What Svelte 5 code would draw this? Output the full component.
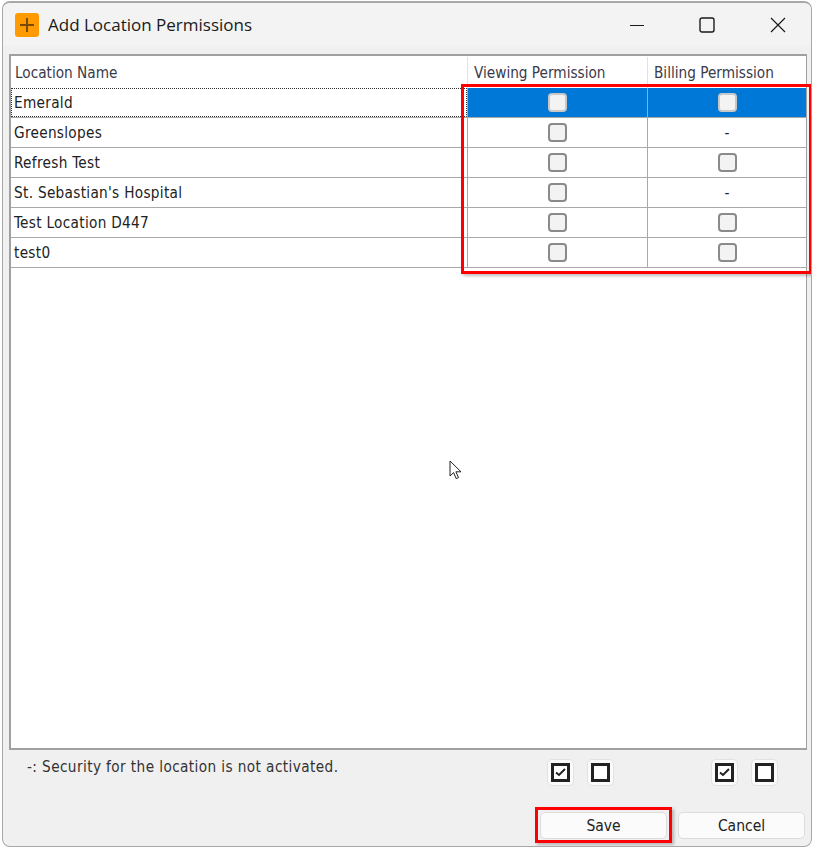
<script>
	const rows = [
		{ name: 'Emerald', billing: true },
		{ name: 'Greenslopes', billing: false },
		{ name: 'Refresh Test', billing: true },
		{ name: "St. Sebastian's Hospital", billing: false },
		{ name: 'Test Location D447', billing: true },
		{ name: 'test0', billing: true }
	];
</script>

<div class="screen">
	<div class="window">
		<header class="titlebar">
			<svg class="app-icon" width="24" height="24" viewBox="0 0 24 24">
				<rect width="24" height="24" rx="3" fill="#ff9a00" />
				<path d="M12 5v14M5 12h14" stroke="#7a4a08" stroke-width="2" fill="none" />
			</svg>
			<span class="title">Add Location Permissions</span>
			<div class="controls">
				<svg width="16" height="16" viewBox="0 0 16 16"><path d="M2 8.5h14" stroke="#1a1a1a" fill="none" /></svg>
				<svg width="16" height="16" viewBox="0 0 16 16"><rect x="1" y="1" width="14" height="14" rx="2" stroke="#1a1a1a" stroke-width="1.4" fill="none" /></svg>
				<svg width="16" height="16" viewBox="0 0 16 16"><path d="M1 1l14 14M15 1L1 15" stroke="#1a1a1a" stroke-width="1.2" fill="none" /></svg>
			</div>
		</header>

		<main class="content">
			<div class="table">
				<div class="row head">
					<div class="cell name">Location Name</div>
					<div class="cell col">Viewing Permission</div>
					<div class="cell col">Billing Permission</div>
				</div>
				{#each rows as row, i}
					<div class="row" class:selected={i === 0}>
						<div class="cell name">{row.name}</div>
						<div class="cell col mid"><span class="check"></span></div>
						<div class="cell col mid">
							{#if row.billing}<span class="check"></span>{:else}-{/if}
						</div>
					</div>
				{/each}
			</div>

			<div class="legend-row">
				<span class="legend">-: Security for the location is not activated.</span>
				<div class="tools">
					{#each [0, 1] as group}
						<div class="tool-group">
							<button class="tool" aria-label="check all">
								<svg width="19" height="19" viewBox="0 0 19 19">
									<rect x="1.5" y="1.5" width="16" height="16" fill="#fff" stroke="#222" stroke-width="3" />
									<path d="M5 9.5l3 2.5 6-6" stroke="#222" stroke-width="2" fill="none" />
								</svg>
							</button>
							<button class="tool" aria-label="uncheck all">
								<svg width="19" height="19" viewBox="0 0 19 19">
									<rect x="1.5" y="1.5" width="16" height="16" fill="#fff" stroke="#222" stroke-width="3" />
								</svg>
							</button>
						</div>
					{/each}
				</div>
			</div>

			<div class="actions">
				<button class="btn">Save</button>
				<button class="btn">Cancel</button>
			</div>
		</main>

		<div class="mark mark-table"></div>
		<div class="mark mark-save"></div>
		<svg class="cursor" width="14" height="21" viewBox="0 0 14 21">
			<path d="M1 1v15l3.6-3.4 2.6 6 2.3-1-2.6-5.8H12z" fill="#fff" stroke="#222" stroke-width="1" />
		</svg>
	</div>
</div>

<style>
	:global(body) { margin: 0; background: #fff; }
	.screen {
		width: 814px; height: 849px; overflow: hidden; background: #fff;
		padding: 1px 2px 0 2px; box-sizing: border-box;
		font-family: "DejaVu Sans", sans-serif; font-stretch: condensed;
	}
	.window {
		position: relative; height: 846px; background: #f0f0f0; border: 1px solid #a8a8a8; border-top-width: 2px;
		border-radius: 8px; box-sizing: border-box; display: flex; flex-direction: column; overflow: hidden;
	}
	.titlebar {
		height: 43px; flex: none; display: flex; align-items: center; background: #f3f3f3;
		padding: 0 0 0 12px; box-sizing: border-box;
	}
	.app-icon { flex: none; }
	.title { margin-left: 9px; font-family: "Open Sans", sans-serif; font-stretch: normal; font-size: 17px; color: #1a1a1a; flex: 1; }
	.controls { display: flex; gap: 55px; padding-right: 25px; align-items: center; }
	.content { flex: 1; display: flex; flex-direction: column; padding: 8px 4px 7px 6px; min-height: 0; }
	.table {
		height: 696px; flex: none; background: #fff; border: 2px solid #a0a0a0; border-right-width: 1px;
		box-sizing: border-box; font-size: 15.2px; letter-spacing: 0.3px; color: #222;
	}
	.row {
		display: grid; grid-template-columns: 456px 180px 1fr; height: 30px;
		border-bottom: 1px solid #a9a9a9; box-sizing: border-box;
	}
	.row.head { height: 32px; border-bottom: 0; color: #3a3a4a; letter-spacing: 0; padding-top: 1px; }
	.cell { display: flex; align-items: center; box-sizing: border-box; }
	.name { padding-left: 3px; }
	.head .name { padding-left: 4px; }
	.col { border-left: 1px solid #a9a9a9; }
	.head .col { border-left-color: #e2e2e2; padding-left: 6px; }
	.mid { justify-content: center; }
	.selected .col { background: #0078d7; }
	.selected .name { outline: 1px dotted #333; outline-offset: -1px; }
	.check {
		width: 19px; height: 19px; box-sizing: border-box; background: #f3f3f3;
		border: 2px solid #8a8a8a; border-radius: 4px;
	}
	.selected .check { border-color: #c8c8c8; }
	.legend-row { display: flex; justify-content: space-between; height: 52px; padding-top: 8px; box-sizing: border-box; }
	.legend { margin-left: 18px; font-size: 15.2px; letter-spacing: 0.4px; color: #333; }
	.tools { display: flex; gap: 97px; padding-right: 29px; padding-top: 1px; }
	.tool-group { display: flex; gap: 13px; }
	.tool {
		width: 27px; height: 27px; padding: 0; display: flex; align-items: center; justify-content: center;
		background: #fbfbfb; border: 1px solid #e2e2e2; border-radius: 5px;
	}
	.actions { display: flex; justify-content: flex-end; gap: 11px; margin-top: auto; padding-right: 2px; }
	.btn {
		width: 127px; height: 27px; background: #fbfbfb; border: 1px solid #dcdcdc; border-radius: 5px;
		font: inherit; font-size: 15.5px; color: #222; padding: 0;
	}
	.mark { position: absolute; border: 3px solid #f00; box-shadow: 2px 2px 3px rgba(0,0,0,0.25); box-sizing: border-box; }
	.mark-table { left: 458px; top: 81px; width: 351px; height: 190px; }
	.mark-save { left: 532px; top: 804px; width: 137px; height: 36px; }
	.cursor { position: absolute; left: 446px; top: 457px; }
</style>
